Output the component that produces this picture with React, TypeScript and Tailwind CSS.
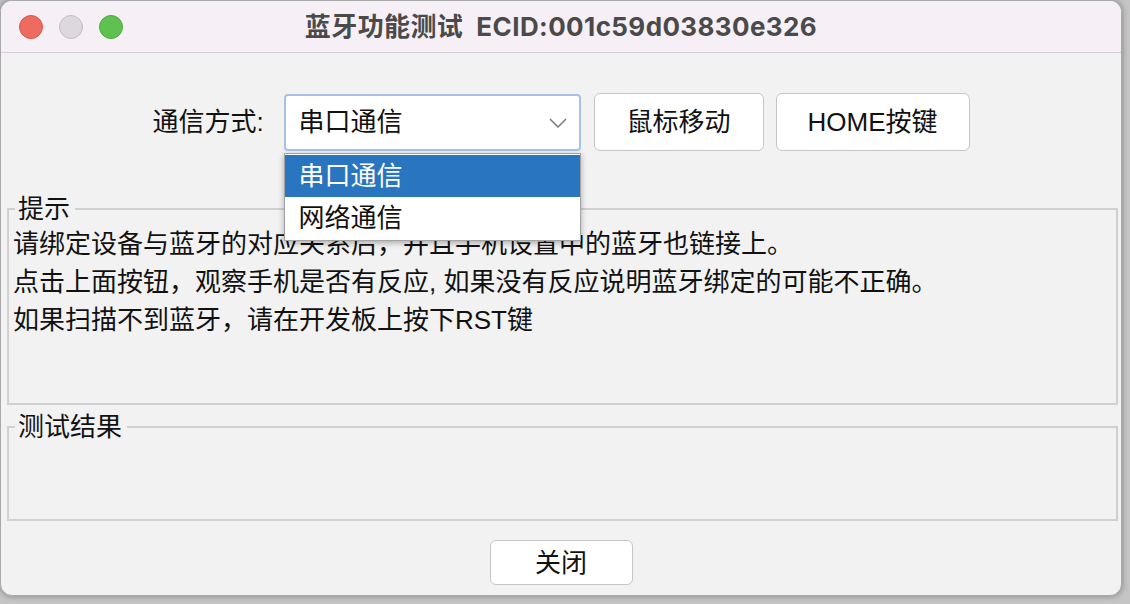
import { useState } from "react";

const bodyFont = "font-['Liberation_Sans','Noto_Sans_CJK_SC',sans-serif]";

function TrafficLights() {
  return (
    <div className="flex items-center gap-[16px] pl-[18px] w-[140px]">
      <span className="w-[24px] h-[24px] rounded-full bg-[#ee6b5f] border border-[#d5574e]" />
      <span className="w-[24px] h-[24px] rounded-full bg-[#ddd7de] border border-[#c4bdc5]" />
      <span className="w-[24px] h-[24px] rounded-full bg-[#5fc250] border border-[#4fa842]" />
    </div>
  );
}

function ComboBox() {
  const [open] = useState(true);
  const options = ["串口通信", "网络通信"];
  return (
    <div className="relative">
      <div className="w-[297px] h-[57px] bg-white border-2 border-[#a6c3e7] rounded-[4px] flex items-center justify-between pl-[13px] pr-[12px]">
        <span className="text-[26px] leading-none text-[#111]">串口通信</span>
        <svg width="18" height="10" viewBox="0 0 18 10" className="mt-[2px]">
          <polyline points="1,1 9,9 17,1" fill="none" stroke="#7a7a7a" strokeWidth="1.5" />
        </svg>
      </div>
      {open && (
        <div className="absolute top-[59px] left-0 w-[297px] bg-white border border-[#a3a3a3] shadow-[0_2px_6px_rgba(0,0,0,0.3)] py-[1px] z-10">
          {options.map((o, i) => (
            <div
              key={o}
              className={`h-[42px] flex items-center pl-[14px] text-[26px] leading-none ${
                i === 0 ? "bg-[#2a75bf] text-white" : "text-[#111]"
              }`}
            >
              {o}
            </div>
          ))}
        </div>
      )}
    </div>
  );
}

function GroupBox({ title, contentHeight, children }: { title: string; contentHeight: string; children?: React.ReactNode }) {
  return (
    <fieldset className="border-2 border-[#d0d0d0] ml-[6px] mr-[3px] pl-[4px]">
      <legend className="ml-[2px] pl-[3px] pr-[5px] text-[26px] leading-[32px] text-[#111]">{title}</legend>
      <div className={contentHeight}>{children}</div>
    </fieldset>
  );
}

export default function App() {
  return (
    <div className={`w-[1130px] h-[604px] overflow-hidden bg-[#c5c5c5] ${bodyFont}`}>
      <div className="w-[1122px] h-[596px] rounded-[12px] overflow-hidden border border-[#a9a9a9] bg-[#f2f2f2] shadow-[0_0_6px_rgba(0,0,0,0.35)] flex flex-col">
        <div className="h-[52px] shrink-0 bg-[#f6eff6] border-b border-[#d2d0d2] flex items-center">
          <TrafficLights />
          <div className="flex-1 text-center font-['Inter','Noto_Sans_CJK_SC',sans-serif] font-bold text-[26px] leading-none tracking-[0.4px] text-[#4a4a4a] whitespace-pre">
            蓝牙功能测试  ECID:001c59d03830e326
          </div>
          <div className="w-[140px]" />
        </div>

        <div className="flex flex-col">
          <div className="flex items-center justify-center pt-[40px] h-[98px] box-border">
            <span className="text-[26px] leading-none text-[#111] mr-[20px]">通信方式:</span>
            <ComboBox />
            <button className="ml-[13px] w-[170px] h-[58px] bg-white border border-[#c6c6c6] rounded-[6px] text-[26px] leading-none text-[#111]">
              鼠标移动
            </button>
            <button className="ml-[12px] w-[194px] h-[58px] bg-white border border-[#c6c6c6] rounded-[6px] text-[26px] leading-none text-[#111]">
              HOME按键
            </button>
          </div>

          <div className="mt-[42px]">
            <GroupBox title="提示" contentHeight="h-[178px]">
              <div className="text-[26px] leading-[38px] text-[#111]">
                <p>请绑定设备与蓝牙的对应关系后，并且手机设置中的蓝牙也链接上。</p>
                <p>点击上面按钮，观察手机是否有反应, 如果没有反应说明蓝牙绑定的可能不正确。</p>
                <p>如果扫描不到蓝牙，请在开发板上按下RST键</p>
              </div>
            </GroupBox>
          </div>

          <div className="mt-[6px]">
            <GroupBox title="测试结果" contentHeight="h-[76px]" />
          </div>

          <div className="flex justify-center mt-[19px]">
            <button className="w-[143px] h-[45px] bg-white border border-[#c6c6c6] rounded-[6px] text-[26px] leading-none text-[#111]">
              关闭
            </button>
          </div>
        </div>
      </div>
    </div>
  );
}
